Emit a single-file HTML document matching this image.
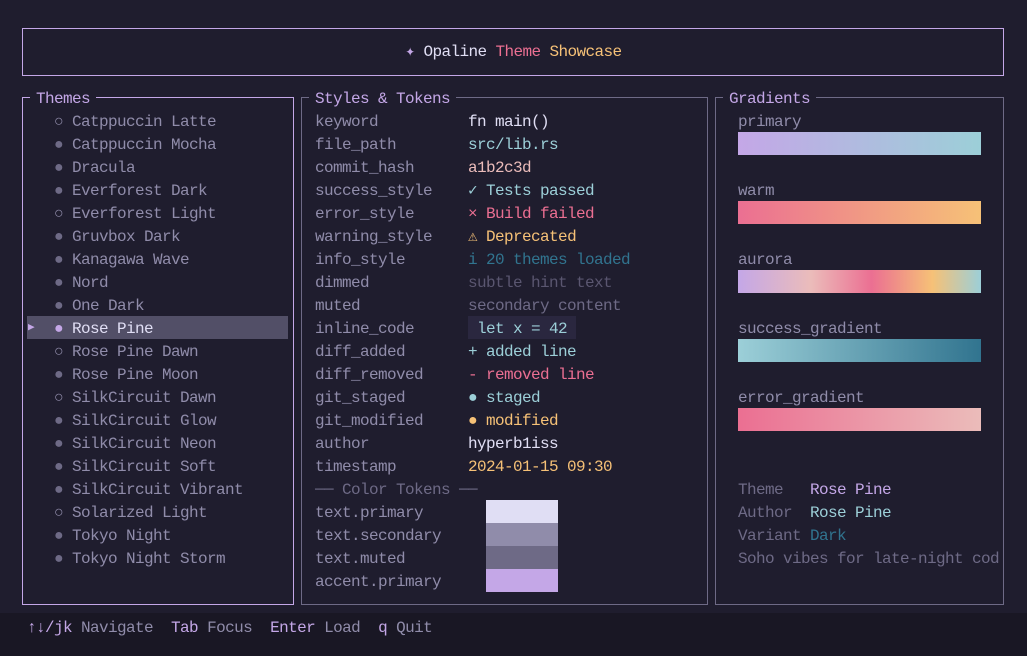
<!DOCTYPE html>
<html><head><meta charset="utf-8"><style>
*{margin:0;padding:0;box-sizing:border-box}
body{width:1027px;height:656px;background:#1f1d2e;overflow:hidden;position:relative;font-family:"Liberation Mono","DejaVu Sans Mono",monospace;font-size:16px;letter-spacing:-0.6px;color:#908caa}
.a{position:absolute;white-space:pre;line-height:23px;height:23px}
.box{position:absolute;border:1px solid #6e6a86}
.f{border-color:#c4a7e7}
.t{position:absolute;background:#1f1d2e;padding:0 6px;line-height:23px;white-space:pre}
.bar{position:absolute;left:738px;width:243px;height:23px}
.sw{position:absolute;left:486px;width:72px;height:23px}
.w{color:#e0def4}.fo{color:#9ccfd8}.lo{color:#eb6f92}.go{color:#f6c177}.pi{color:#31748f}.mu{color:#6e6a86}.ir{color:#c4a7e7}.ro{color:#ebbcba}
</style></head><body>
<div class="box f" style="left:22px;top:28px;width:982px;height:48px"></div>
<div class="a" style="left:0;width:1027px;text-align:center;top:41px"><span class="ir">✦</span> <span class="w">Opaline</span> <span class="lo">Theme</span> <span class="go">Showcase</span></div>

<div class="box f" style="left:22px;top:97px;width:272px;height:508px"></div>
<div class="t ir" style="left:30px;top:88px">Themes</div>
<div class="box" style="left:301px;top:97px;width:407px;height:508px"></div>
<div class="t ir" style="left:309px;top:88px">Styles &amp; Tokens</div>
<div class="box" style="left:715px;top:97px;width:289px;height:508px"></div>
<div class="t ir" style="left:723px;top:88px">Gradients</div>

<div style="position:absolute;left:27px;top:316px;width:261px;height:23px;background:#524f67"></div>
<div class="a" style="left:54px;top:111px">○ Catppuccin Latte
<span class="mu">●</span> Catppuccin Mocha
<span class="mu">●</span> Dracula
<span class="mu">●</span> Everforest Dark
○ Everforest Light
<span class="mu">●</span> Gruvbox Dark
<span class="mu">●</span> Kanagawa Wave
<span class="mu">●</span> Nord
<span class="mu">●</span> One Dark
<span class="ir">●</span> <span class="w">Rose Pine</span>
○ Rose Pine Dawn
<span class="mu">●</span> Rose Pine Moon
○ SilkCircuit Dawn
<span class="mu">●</span> SilkCircuit Glow
<span class="mu">●</span> SilkCircuit Neon
<span class="mu">●</span> SilkCircuit Soft
<span class="mu">●</span> SilkCircuit Vibrant
○ Solarized Light
<span class="mu">●</span> Tokyo Night
<span class="mu">●</span> Tokyo Night Storm</div>
<div class="a ir" style="left:28px;top:317px;font-size:11px">▶</div>

<div class="a" style="left:315px;top:111px">keyword
file_path
commit_hash
success_style
error_style
warning_style
info_style
dimmed
muted
inline_code
diff_added
diff_removed
git_staged
git_modified
author
timestamp
<span class="mu">── Color Tokens ──</span>
text.primary
text.secondary
text.muted
accent.primary</div>
<div style="position:absolute;left:468px;top:316px;width:108px;height:23px;background:#2a273f"></div>
<div class="a" style="left:468px;top:111px"><span class="w">fn main()</span>
<span class="fo">src/lib.rs</span>
<span class="ro">a1b2c3d</span>
<span class="fo">✓ Tests passed</span>
<span class="lo">× Build failed</span>
<span class="go"><b>⚠</b> Deprecated</span>
<span class="pi">i 20 themes loaded</span>
<span style="color:#5a5670">subtle hint text</span>
<span class="mu">secondary content</span>
<span class="fo"> let x = 42</span>
<span class="fo">+ added line</span>
<span class="lo">- removed line</span>
<span class="fo">● staged</span>
<span class="go">● modified</span>
<span class="w">hyperb1iss</span>
<span class="go">2024-01-15 09:30</span></div>
<div class="sw" style="top:500px;background:#e0def4"></div>
<div class="sw" style="top:523px;background:#908caa"></div>
<div class="sw" style="top:546px;background:#6e6a86"></div>
<div class="sw" style="top:569px;background:#c4a7e7"></div>

<div class="a" style="left:738px;top:111px">primary</div>
<div class="bar" style="top:132px;background:linear-gradient(90deg,#c4a7e7,#9ccfd8)"></div>
<div class="a" style="left:738px;top:180px">warm</div>
<div class="bar" style="top:201px;background:linear-gradient(90deg,#eb6f92,#f6c177)"></div>
<div class="a" style="left:738px;top:249px">aurora</div>
<div class="bar" style="top:270px;background:linear-gradient(90deg,#c4a7e7,#ebbcba 30%,#eb6f92 55%,#f6c177 80%,#9ccfd8)"></div>
<div class="a" style="left:738px;top:318px">success_gradient</div>
<div class="bar" style="top:339px;background:linear-gradient(90deg,#9ccfd8,#31748f)"></div>
<div class="a" style="left:738px;top:387px">error_gradient</div>
<div class="bar" style="top:408px;background:linear-gradient(90deg,#eb6f92,#ebbcba)"></div>

<div class="a mu" style="left:738px;top:479px;width:262px;overflow:hidden;height:92px">Theme   <span class="ir">Rose Pine</span>
Author  <span class="fo">Rose Pine</span>
Variant <span class="pi">Dark</span>
Soho vibes for late-night cod</div>

<div style="position:absolute;left:0;top:613px;width:1027px;height:43px;background:#191724"></div>
<div class="a" style="left:27px;top:617px"><span class="ir">↑↓/jk</span> Navigate  <span class="ir">Tab</span> Focus  <span class="ir">Enter</span> Load  <span class="ir">q</span> Quit</div>
</body></html>
